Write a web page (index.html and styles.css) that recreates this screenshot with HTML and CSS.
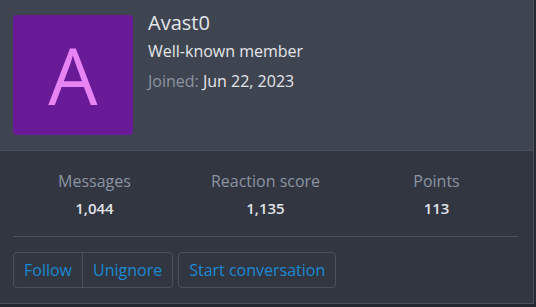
FILE: index.html
```html
<!DOCTYPE html>
<html>
<head>
<meta charset="utf-8">
<link rel="stylesheet" href="styles.css">
</head>
<body>
<div class="page">
  <div class="card">
    <div class="head">
      <div class="avatar"><span>A</span></div>
      <div class="info">
        <div class="name">Avast0</div>
        <div class="title">Well-known member</div>
        <div class="joined"><span class="muted">Joined:</span> Jun 22, 2023</div>
      </div>
    </div>
    <div class="body">
      <div class="stats">
        <div class="stat-row">
          <div class="stat"><div class="label">Messages</div><div class="value">1,044</div></div>
          <div class="stat"><div class="label">Reaction score</div><div class="value">1,135</div></div>
          <div class="stat"><div class="label">Points</div><div class="value">113</div></div>
        </div>
      </div>
      <div class="actions">
        <div class="group">
          <a class="btn">Follow</a><a class="btn">Unignore</a>
        </div>
        <div class="group">
          <a class="btn">Start conversation</a>
        </div>
      </div>
    </div>
  </div>
  <div class="edge"></div>
</div>
</body>
</html>
```

FILE: styles.css
```css
html, body {
  margin: 0;
  padding: 0;
  background: #22262d;
}
body {
  font-family: "Open Sans", "Noto Sans", sans-serif;
  width: 536px;
  height: 307px;
  overflow: hidden;
}
.page {
  display: flex;
}
.card {
  width: 533px;
  border-right: 1px solid #4b515c;
  border-bottom: 1px solid #4b515c;
  background: #313641;
}
.edge {
  flex: 1;
  height: 304px;
  background: #262a31;
}
.head {
  display: flex;
  height: 151px;
  box-sizing: border-box;
  padding: 15px 13px 0;
  background: #3f4550;
  border-bottom: 1px solid #4b515c;
}
.avatar {
  width: 120px;
  height: 120px;
  border-radius: 4px;
  background: #681a97;
  display: flex;
  align-items: center;
  justify-content: center;
}
.avatar span {
  color: #e883f3;
  font-size: 78px;
  line-height: 1;
  font-family: "Open Sans", sans-serif;
}
.info {
  margin-left: 15px;
  color: #e4e6ea;
}
.name {
  font-size: 20px;
  line-height: 24px;
  margin-top: -4px;
}
.title {
  font-size: 16px;
  line-height: 20px;
  margin-top: 6px;
}
.joined {
  font-size: 16px;
  line-height: 20px;
  margin-top: 10px;
}
.muted {
  color: #8b94a1;
}
.body {
  padding: 0 15px 15px 13px;
}
.stats {
  padding: 19px 0 17px;
  border-bottom: 1px solid #4b515c;
}
.stat-row {
  display: flex;
  margin: 0 -4px;
}
.stat {
  flex: 1;
  text-align: center;
}
.label {
  font-size: 16px;
  line-height: 22px;
  color: #8b94a1;
}
.value {
  font-size: 15px;
  line-height: 22px;
  font-weight: 600;
  color: #e1e4e9;
  margin-top: 5px;
}
.actions {
  display: flex;
  gap: 5px;
  padding-top: 15px;
}
.group {
  display: flex;
  box-sizing: border-box;
  border: 1px solid #4b515c;
  border-radius: 4px;
  height: 36px;
}
.btn {
  display: flex;
  align-items: center;
  padding: 0 10px;
  font-size: 16px;
  color: #1b8ad3;
}
.btn + .btn {
  border-left: 1px solid #4b515c;
}
```
